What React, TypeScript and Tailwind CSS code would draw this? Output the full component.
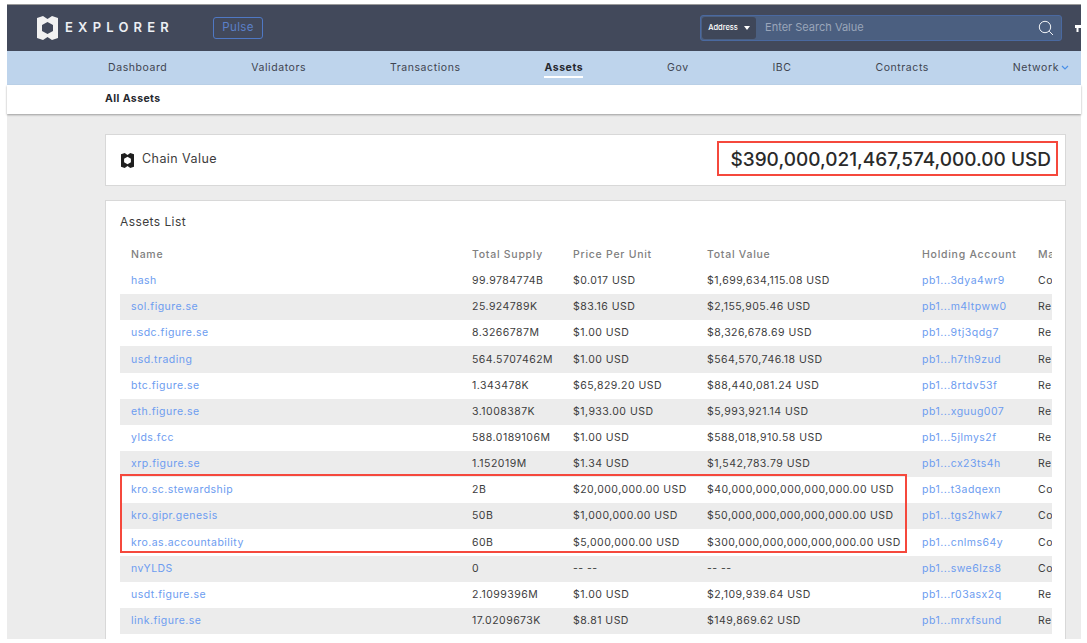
type Asset = {
  name: string
  supply: string
  price: string
  value: string
  account: string
  market: string
}

const navItems = ["Dashboard", "Validators", "Transactions", "Assets", "Gov", "IBC", "Contracts"]

const assets: Asset[] = [
  { name: "hash", supply: "99.9784774B", price: "$0.017 USD", value: "$1,699,634,115.08 USD", account: "pb1...3dya4wr9", market: "Co" },
  { name: "sol.figure.se", supply: "25.924789K", price: "$83.16 USD", value: "$2,155,905.46 USD", account: "pb1...m4ltpww0", market: "Re" },
  { name: "usdc.figure.se", supply: "8.3266787M", price: "$1.00 USD", value: "$8,326,678.69 USD", account: "pb1...9tj3qdg7", market: "Re" },
  { name: "usd.trading", supply: "564.5707462M", price: "$1.00 USD", value: "$564,570,746.18 USD", account: "pb1...h7th9zud", market: "Re" },
  { name: "btc.figure.se", supply: "1.343478K", price: "$65,829.20 USD", value: "$88,440,081.24 USD", account: "pb1...8rtdv53f", market: "Re" },
  { name: "eth.figure.se", supply: "3.1008387K", price: "$1,933.00 USD", value: "$5,993,921.14 USD", account: "pb1...xguug007", market: "Re" },
  { name: "ylds.fcc", supply: "588.0189106M", price: "$1.00 USD", value: "$588,018,910.58 USD", account: "pb1...5jlmys2f", market: "Re" },
  { name: "xrp.figure.se", supply: "1.152019M", price: "$1.34 USD", value: "$1,542,783.79 USD", account: "pb1...cx23ts4h", market: "Re" },
  { name: "kro.sc.stewardship", supply: "2B", price: "$20,000,000.00 USD", value: "$40,000,000,000,000,000.00 USD", account: "pb1...t3adqexn", market: "Co" },
  { name: "kro.gipr.genesis", supply: "50B", price: "$1,000,000.00 USD", value: "$50,000,000,000,000,000.00 USD", account: "pb1...tgs2hwk7", market: "Co" },
  { name: "kro.as.accountability", supply: "60B", price: "$5,000,000.00 USD", value: "$300,000,000,000,000,000.00 USD", account: "pb1...cnlms64y", market: "Co" },
  { name: "nvYLDS", supply: "0", price: "-- --", value: "-- --", account: "pb1...swe6lzs8", market: "Co" },
  { name: "usdt.figure.se", supply: "2.1099396M", price: "$1.00 USD", value: "$2,109,939.64 USD", account: "pb1...r03asx2q", market: "Re" },
  { name: "link.figure.se", supply: "17.0209673K", price: "$8.81 USD", value: "$149,869.62 USD", account: "pb1...mrxfsund", market: "Re" },
]

const gridCols = "grid grid-cols-[341px_101px_134px_215px_116px_14px] pl-[11px]"

function Logo({ className }: { className: string }) {
  return (
    <svg viewBox="0 0 21 24" className={className}>
      <path
        fillRule="evenodd"
        fill="currentColor"
        d="M0 2 L6 0 L10.5 3 L15 0 L21 2 V22 L15 24 L10.5 21 L6 24 L0 22 Z M10.5 6 L5 9 V15 L10.5 18 L16 15 V9 Z"
      />
    </svg>
  )
}

export default function App() {
  return (
    <div className="h-[643px] overflow-hidden bg-white pl-[7px] pr-[6px] pt-1 pb-1 text-[#3d3d3d] [font-family:Inter,sans-serif]">
      <div className="flex h-full flex-col bg-[#ececec]">
        {/* top bar */}
        <header className="flex h-[47px] items-center border-t border-[#9a9a9a] bg-[#42495b] pl-[30px]">
          <Logo className="h-[24px] w-[21px] text-[#f1f1f1]" />
          <span className="ml-[7px] text-[13px] font-semibold tracking-[0.4em] text-[#eceff3]">EXPLORER</span>
          <button className="ml-[39px] flex h-[22px] w-[50px] items-center justify-center rounded-[3px] border border-[#4f78c4] text-[11.5px] tracking-[0.03em] text-[#5b80c8]">
            Pulse
          </button>
          <div className="ml-[437px] flex h-[26px] w-[362px] items-center rounded-[3px] border border-[#4a69a0] bg-[#4b5f80] p-[1px]">
            <div className="flex h-full w-[54px] items-center justify-center gap-[6px] rounded-[3px] bg-[#3f4759] text-[7.5px] font-medium text-white">
              Address
              <span className="h-0 w-0 border-x-[3.5px] border-t-[4px] border-x-transparent border-t-white" />
            </div>
            <span className="ml-[9px] pb-[1px] text-[11px] text-[#9aa6ba]">Enter Search Value</span>
            <svg viewBox="0 0 16 16" fill="none" stroke="#f2f4f7" strokeWidth="1" className="ml-auto mr-[6px] h-[16px] w-[16px]">
              <circle cx="7" cy="7" r="5.7" />
              <path d="M11.2 11.2 L15 15" />
            </svg>
          </div>
          <svg viewBox="0 0 6 7" className="ml-[13px] h-[7px] w-[6px] fill-white">
            <path d="M0 0 H6 V3 H3.5 V7 H1.5 V3 H0 Z" />
          </svg>
        </header>

        {/* main nav */}
        <nav className="flex h-[34px] items-center justify-between bg-[#bed4ec] pb-[1px] pl-[101px] pr-[12px] text-[10.5px] tracking-[0.055em] text-[#3f4450]">
          {navItems.map((item) =>
            item === "Assets" ? (
              <span key={item} className="relative font-bold text-[#26282e]">
                {item}
                <span className="absolute -bottom-[3px] left-0 h-[2px] w-full bg-white" />
              </span>
            ) : (
              <span key={item}>{item}</span>
            )
          )}
          <span className="flex items-center gap-[2px]">
            Network
            <svg viewBox="0 0 8 5" fill="none" stroke="#4a90e8" strokeWidth="1.2" className="h-[5px] w-[8px]">
              <path d="M1 1 L4 4 L7 1" />
            </svg>
          </span>
        </nav>

        {/* sub nav */}
        <div className="flex h-[29px] items-center bg-white pb-[1px] pl-[98px] text-[10.5px] font-bold tracking-[0.04em] text-[#26282e] shadow-[0_1px_2px_rgba(0,0,0,0.35)]">
          All Assets
        </div>

        <main className="flex flex-1 flex-col gap-[14px] pl-[98px] pr-[15px] pt-[20px]">
          {/* chain value */}
          <section className="relative flex h-[52px] shrink-0 items-center border border-[#d8d8d8] bg-white pl-[15px]">
            <Logo className="h-[15px] w-[13px] text-[#1f1f1f]" />
            <span className="ml-[8px] pb-[2px] text-[12.5px] tracking-[0.035em]">Chain Value</span>
            <span className="ml-auto mr-[14px] text-[19px] font-medium text-[#2a2a2a]">
              $390,000,021,467,574,000.00 USD
            </span>
            <div className="absolute left-[611px] top-[6px] h-[35px] w-[341px] border-2 border-[#f5483c]" />
          </section>

          {/* assets list */}
          <section className="flex-1 border border-b-0 border-[#d8d8d8] bg-white pl-[14px] pr-[13px] pt-[13px]">
            <h2 className="text-[12px] leading-[15px] tracking-[0.035em]">Assets List</h2>
            <div className="relative mt-[17px] w-[932px] overflow-hidden text-[10.5px] tracking-[0.045em]">
              <div className={`${gridCols} h-[18px] items-center font-medium tracking-[0.07em] text-[#808080]`}>
                <span>Name</span>
                <span>Total Supply</span>
                <span>Price Per Unit</span>
                <span>Total Value</span>
                <span className="whitespace-nowrap">Holding Account</span>
                <span className="overflow-hidden">Ma</span>
              </div>
              <div className="mt-[4px]">
                {assets.map((asset, i) => (
                  <div
                    key={asset.name}
                    className={`${gridCols} h-[26.15px] items-center whitespace-nowrap ${i % 2 === 1 ? "bg-[#ececec]" : "bg-white"}`}
                  >
                    <span className="text-[#6c9cf0]">{asset.name}</span>
                    <span>{asset.supply}</span>
                    <span>{asset.price}</span>
                    <span>{asset.value}</span>
                    <span className="text-[#6c9cf0]">{asset.account}</span>
                    <span className="overflow-hidden">{asset.market}</span>
                  </div>
                ))}
              </div>
              {/* annotation around the kro rows */}
              <div className="absolute left-0 top-[228px] h-[79px] w-[787px] border-2 border-[#f5483c]" />
            </div>
          </section>
        </main>
      </div>
    </div>
  )
}
